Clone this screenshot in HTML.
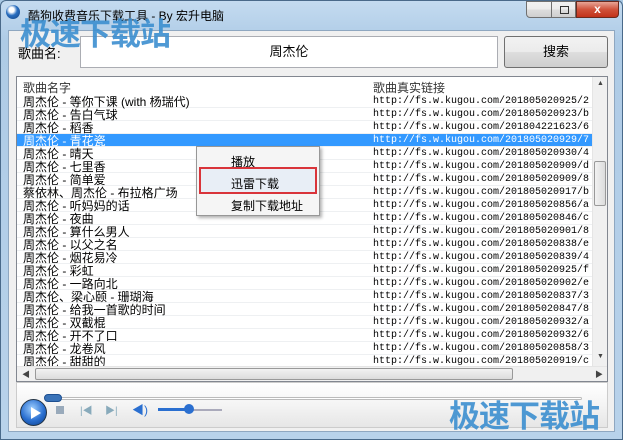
<!DOCTYPE html>
<html><head><meta charset="utf-8"><style>
*{margin:0;padding:0;box-sizing:border-box}
body{width:623px;height:440px;overflow:hidden;background:#a9c8e3;font-family:"Liberation Sans","Noto Sans CJK SC",sans-serif;position:relative}
.frame{position:absolute;left:0;top:0;width:623px;height:440px;background:linear-gradient(#c4dbf0,#aecbe6 40px,#b8d2ea);border:1px solid #4a6a8a;border-radius:6px 6px 0 0}
.client{position:absolute;left:8px;top:30px;width:607px;height:402px;background:#f0f0f0;border:1px solid #8fa7c0}
.abs{position:absolute}
.title{left:28px;top:7px;font-size:12px;color:#000}
.wm{font-size:31px;font-weight:bold;color:#3c8fd0;letter-spacing:-1px;opacity:.9}
.list{left:16px;top:76px;width:592px;height:306px;background:#fff;border:1px solid #828790;overflow:hidden}
.row{position:absolute;left:0;width:575px;height:13px;font-size:12px;line-height:14px;border-bottom:1px solid #eef0f2}
.row span{position:absolute;left:6px;top:0;white-space:nowrap}
.row i{position:absolute;left:356px;top:0;font-style:normal;font-family:"Liberation Mono",monospace;font-size:10px;white-space:nowrap}
.sel{background:#3399ff;color:#fff}
.menu{left:196px;top:146px;width:124px;height:70px;background:#f5f5f5;border:1px solid #979797;box-shadow:2px 2px 3px rgba(0,0,0,.3);font-size:12px}
.btn{border:1px solid #707070;border-radius:3px;background:linear-gradient(#f2f2f2,#ebebeb 50%,#dddddd 51%,#cfcfcf)}
</style></head><body>
<div class="frame"></div>
<div class="abs" style="left:6px;top:5px;width:14px;height:14px;border-radius:50%;background:radial-gradient(circle at 40% 35%,#fff 0 20%,#2a6fc0 45%,#123f80)"></div>
<div class="abs title">酷狗收费音乐下载工具 - By 宏升电脑</div>
<div class="abs btn" style="left:526px;top:1px;width:26px;height:17px;border-radius:0 0 0 4px"></div>
<div class="abs btn" style="left:551px;top:1px;width:25px;height:17px;border-radius:0"><div class="abs" style="left:8px;top:4px;width:9px;height:8px;border:1px solid #333"></div></div>
<div class="abs" style="left:576px;top:1px;width:43px;height:17px;border:1px solid #6b2a1e;border-radius:0 0 4px 0;background:linear-gradient(#e7a596,#d0523b 50%,#c2331b);color:#fff;font-size:12px;font-weight:bold;text-align:center;line-height:15px">x</div>
<div class="client"></div>
<div class="abs" style="left:18px;top:43px;font-size:13px">歌曲名:</div>
<div class="abs" style="left:80px;top:36px;width:418px;height:32px;background:#fff;border:1px solid #abadb3;font-size:13px;text-align:center;line-height:30px">周杰伦</div>
<div class="abs btn" style="left:504px;top:36px;width:104px;height:32px;font-size:13px;text-align:center;line-height:30px">搜索</div>
<div class="abs list">
 <div class="abs" style="left:6px;top:2px;font-size:12px;color:#333">歌曲名字</div>
 <div class="abs" style="left:356px;top:2px;font-size:12px;color:#333">歌曲真实链接</div>
 <div id="rows"></div>
 <div class="abs" style="left:575px;top:0;width:15px;height:289px;background:#f0f0f0;border-left:1px solid #e5e5e5"><div class="abs" style="left:1px;top:84px;width:12px;height:45px;border:1px solid #999;border-radius:2px;background:linear-gradient(90deg,#f2f2f2,#dcdcdc)"></div><div class="abs" style="left:4px;top:3px;font-size:7px;color:#444">▲</div><div class="abs" style="left:4px;top:276px;font-size:7px;color:#444">▼</div></div>
 <div class="abs" style="left:0;top:289px;width:590px;height:15px;background:#f0f0f0;border-top:1px solid #e5e5e5"><div class="abs" style="left:18px;top:1px;width:478px;height:12px;border:1px solid #999;border-radius:2px;background:linear-gradient(#f2f2f2,#dcdcdc)"></div><div class="abs" style="left:5px;top:2px;font-size:8px;color:#444">◀</div><div class="abs" style="left:578px;top:2px;font-size:8px;color:#444">▶</div></div>
</div>
<div class="abs" style="left:16px;top:382px;width:592px;height:46px;background:linear-gradient(#fff,#f4f4f4 50%,#e6e6e6);border:1px solid #ccc"></div>
<div class="abs" style="left:47px;top:397px;width:535px;height:3px;border:1px solid #bbb;border-radius:2px;background:#fff"></div>
<div class="abs" style="left:44px;top:394px;width:18px;height:8px;border-radius:4px;background:#3a73b8;border:1px solid #1e4f90"></div>
<div class="abs" style="left:20px;top:399px;width:27px;height:27px;border-radius:50%;background:radial-gradient(circle at 45% 35%,#9fd0ff,#2a6fd0 55%,#0b3b85);border:1px solid #234"><div class="abs" style="left:10px;top:7px;width:0;height:0;border-left:10px solid #fff;border-top:6px solid transparent;border-bottom:6px solid transparent"></div></div>
<div class="abs" style="left:56px;top:406px;width:8px;height:8px;background:#9ab"></div>
<div class="abs" style="left:80px;top:402px;font-size:10px;color:#8ab">|◀</div>
<div class="abs" style="left:105px;top:402px;font-size:10px;color:#8ab">▶|</div>
<div class="abs" style="left:132px;top:401px;font-size:12px;color:#2a6fd0">◀)</div>
<div class="abs" style="left:158px;top:409px;width:64px;height:2px;background:#aab"></div>
<div class="abs" style="left:158px;top:408px;width:32px;height:3px;background:#2a6fd0"></div>
<div class="abs" style="left:184px;top:404px;width:10px;height:10px;border-radius:50%;background:#2a6fd0"></div>
<div class="abs wm" style="left:20px;top:9px">极速下载站</div>
<div class="abs wm" style="left:449px;top:391px">极速下载站</div>
<div class="abs menu">
 <div class="abs" style="left:34px;top:6px">播放</div>
 <div class="abs" style="left:2px;top:20px;width:118px;height:27px;border:2px solid #d9343a;background:#e8eef6"></div>
 <div class="abs" style="left:34px;top:28px">迅雷下载</div>
 <div class="abs" style="left:34px;top:50px">复制下载地址</div>
</div>
<script>
var s=[["等你下课 (with 杨瑞代)","0925/2"],["告白气球","0923/b"],["稻香","4221623/6"],["青花瓷","0929/7"],["晴天","0930/4"],["七里香","0909/d"],["简单爱","0909/8"],["","0917/b"],["听妈妈的话","0856/a"],["夜曲","0846/c"],["算什么男人","0901/8"],["以父之名","0838/e"],["烟花易冷","0839/4"],["彩虹","0925/f"],["一路向北","0902/e"],["","0837/3"],["给我一首歌的时间","0847/8"],["双截棍","0932/a"],["开不了口","0932/6"],["龙卷风","0858/3"],["甜甜的","0919/c"]];
var h="";s.forEach(function(r,i){var n=r[0]?"周杰伦 - "+r[0]:(i==7?"蔡依林、周杰伦 - 布拉格广场":"周杰伦、梁心颐 - 珊瑚海");var u="http://fs.w.kugou.com/2018"+(r[1].length>6?"0"+r[1]:"050"+"2"+r[1]);
h+='<div class="row'+(i==3?' sel':'')+'" style="top:'+(18+i*13)+'px"><span>'+n+'</span><i>'+u+'</i></div>';});
document.getElementById("rows").innerHTML=h;
</script>
</body></html>
